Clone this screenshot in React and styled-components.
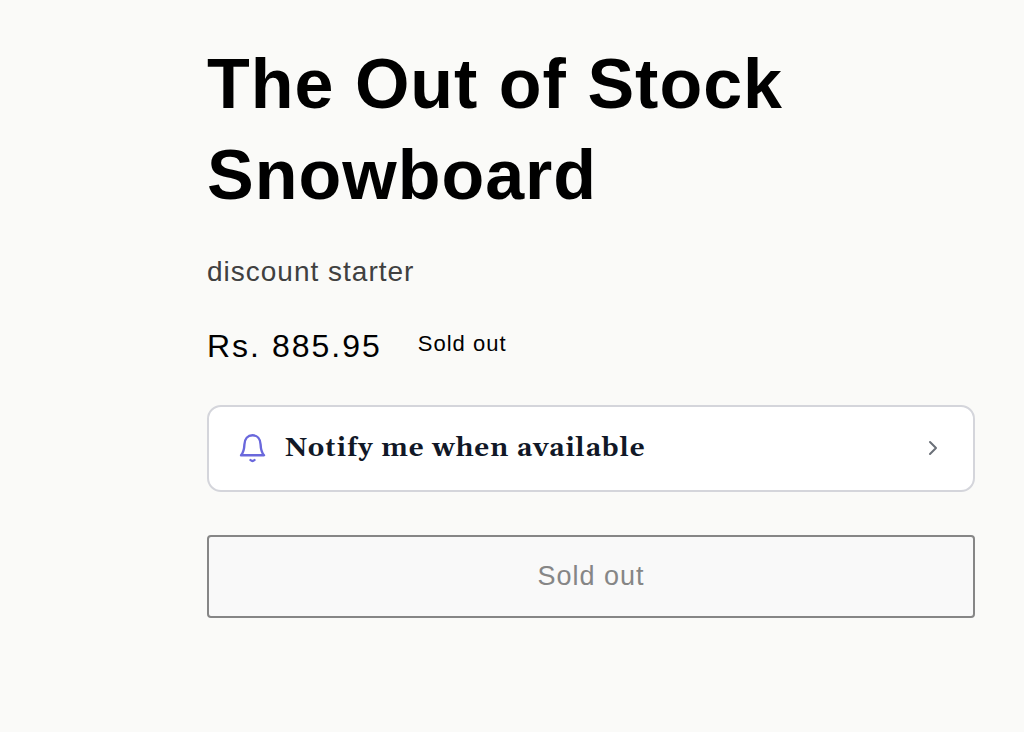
import React from 'react';
import styled, { createGlobalStyle } from 'styled-components';

const GlobalStyle = createGlobalStyle`
  * { box-sizing: border-box; }
  body {
    margin: 0;
    background: #fafaf8;
    color: #000;
    font-family: "Liberation Sans", Arial, sans-serif;
  }
`;

const Product = styled.main`
  display: flex;
  flex-direction: column;
  padding: 39px 49px 48px 207px;
`;

const Title = styled.h1`
  margin: 0;
  font-size: 70px;
  line-height: 91px;
  font-weight: 700;
  letter-spacing: 1px;
`;

const Subtitle = styled.p`
  margin: 31px 0 0;
  font-size: 28px;
  line-height: 40px;
  letter-spacing: 1px;
  color: #404040;
`;

const PriceRow = styled.div`
  display: flex;
  align-items: flex-start;
  gap: 36px;
  margin-top: 31px;
`;

const Price = styled.span`
  font-size: 32px;
  line-height: 46px;
  letter-spacing: 2px;
`;

const Badge = styled.span`
  font-size: 22px;
  line-height: 42px;
  letter-spacing: 1px;
`;

const NotifyButton = styled.button`
  display: flex;
  align-items: center;
  gap: 18px;
  width: 100%;
  height: 87px;
  margin-top: 36px;
  padding: 0 30px;
  border: 2px solid #d4d5db;
  border-radius: 14px;
  background: #fff;
  color: #111827;
  font-family: Gelasio, Georgia, "Liberation Serif", serif;
  font-size: 26px;
  font-weight: 700;
  text-align: left;
`;

const NotifyLabel = styled.span`
  flex: 1;
  letter-spacing: 1px;
`;

const SoldOutButton = styled.button`
  width: 100%;
  height: 83px;
  margin-top: 43px;
  padding: 0;
  border: 2px solid #868686;
  border-radius: 4px;
  background: #f9f9f9;
  color: #868686;
  font-family: inherit;
  font-size: 27px;
  letter-spacing: 1px;
`;

function BellIcon() {
  return (
    <svg width="28" height="32" viewBox="0 0 28 32" fill="none" stroke="#6a68dc" strokeWidth="2.4" strokeLinecap="round" strokeLinejoin="round" aria-hidden="true">
      <path d="M2 22.2C4.4 19.6 5.2 17 5.4 11.5C5.6 5.8 8.8 2.3 13.5 2.3S21.4 5.8 21.6 11.5C21.8 17 22.6 19.6 25 22.2Z" />
      <path d="M11.5 27Q13.5 29 15.5 27" />
    </svg>
  );
}

function ChevronIcon() {
  return (
    <svg width="20" height="20" viewBox="0 0 20 20" fill="none" stroke="#6b7078" strokeWidth="2" strokeLinecap="round" strokeLinejoin="round" aria-hidden="true">
      <path d="M7 3l6 6-6 6" />
    </svg>
  );
}

export default function App() {
  return (
    <>
      <GlobalStyle />
      <Product>
        <Title>The Out of Stock Snowboard</Title>
        <Subtitle>discount starter</Subtitle>
        <PriceRow>
          <Price>Rs. 885.95</Price>
          <Badge>Sold out</Badge>
        </PriceRow>
        <NotifyButton type="button">
          <BellIcon />
          <NotifyLabel>Notify me when available</NotifyLabel>
          <ChevronIcon />
        </NotifyButton>
        <SoldOutButton type="button" disabled>Sold out</SoldOutButton>
      </Product>
    </>
  );
}
